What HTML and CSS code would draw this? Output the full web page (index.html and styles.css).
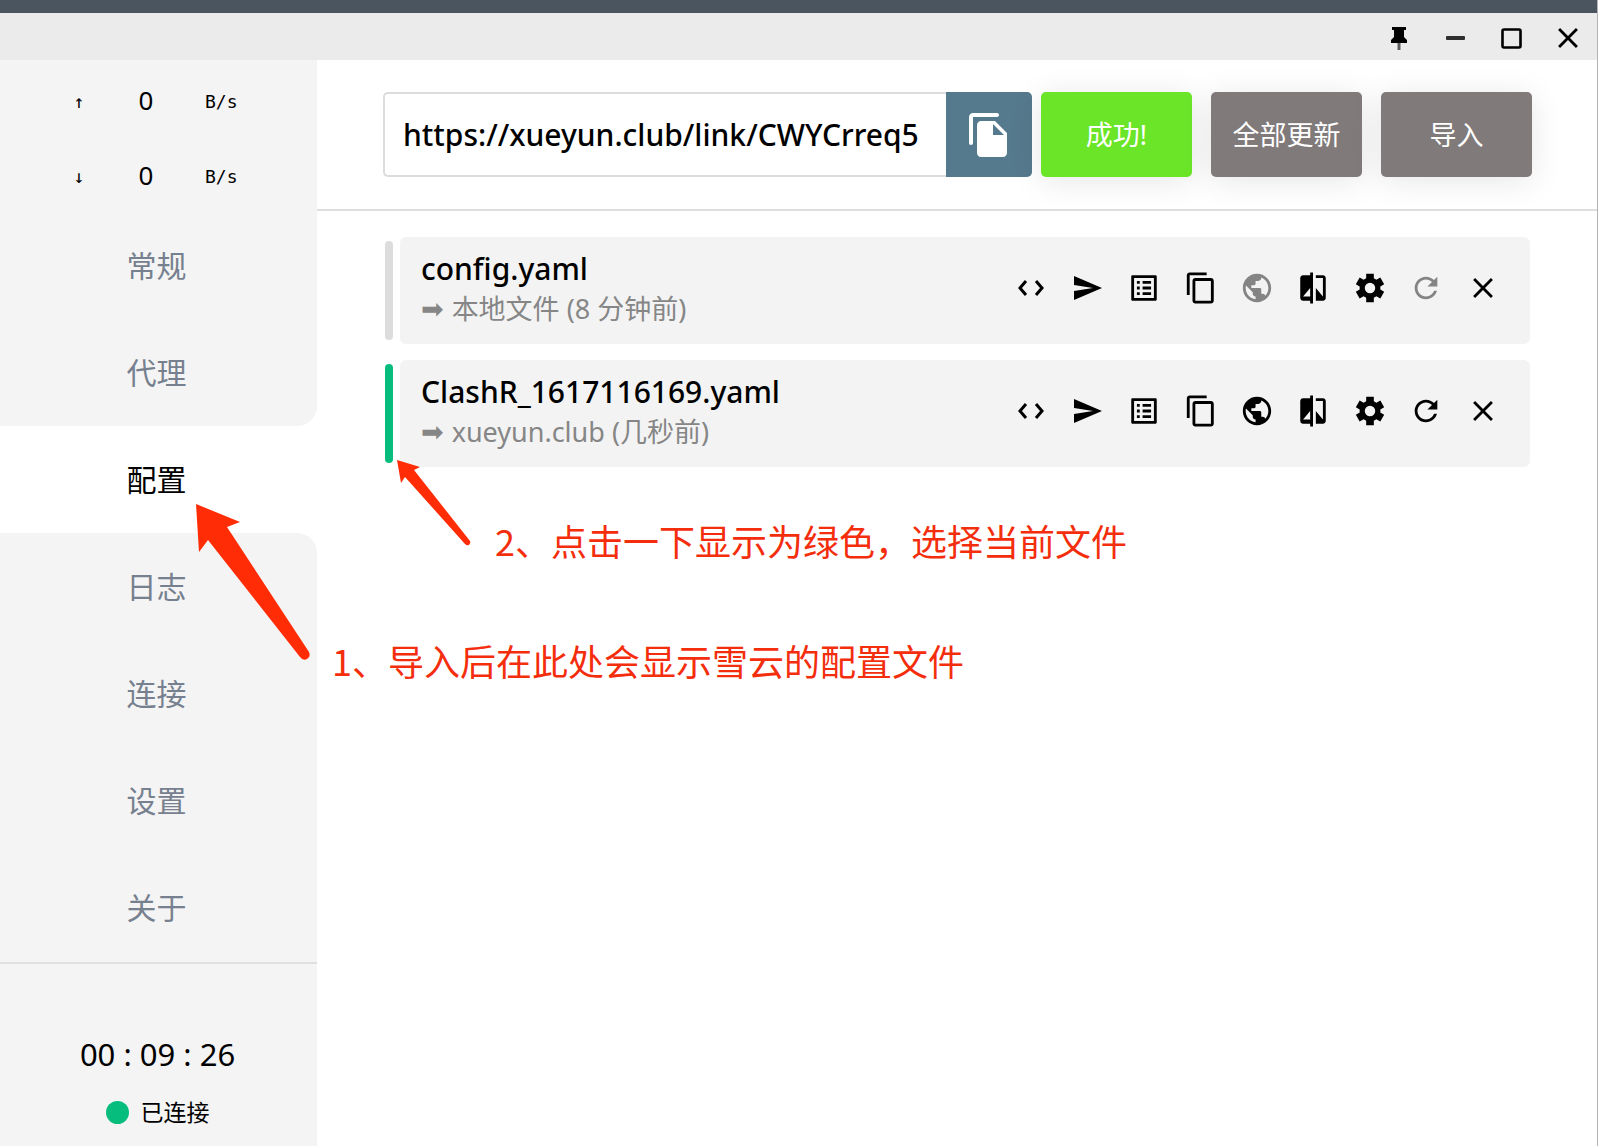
FILE: index.html
```html
<!DOCTYPE html>
<html lang="zh-CN">
<head>
<meta charset="utf-8">
<title>Clash</title>
<link rel="stylesheet" href="styles.css">
</head>
<body>
<svg class="sprite" aria-hidden="true">
  <symbol id="i-code" viewBox="0 0 34 34"><path d="M12 10 6 17l6 7M22 10l6 7-6 7" fill="none" stroke="currentColor" stroke-width="3"/></symbol>
  <symbol id="i-send" viewBox="0 0 34 34"><path d="M3 5v9l19 3-19 3v9l28-12z"/></symbol>
  <symbol id="i-list" viewBox="0 0 24 24"><path d="M19 5v14H5V5h14m1.100-2H3.900c-.5 0-.9.400-.9.900v16.200c0 .4.400.9.900.9h16.200c.4 0 .9-.5.900-.9V3.900c0-.5-.5-.9-.9-.9zM11 7h6v2h-6V7zm0 4h6v2h-6v-2zm0 4h6v2h-6zM7 7h2v2H7zm0 4h2v2H7zm0 4h2v2H7z"/></symbol>
  <symbol id="i-copy" viewBox="0 0 24 24"><path d="M16 1H4c-1.100 0-2 .9-2 2v14h2V3h12V1zm3 4H8c-1.100 0-2 .9-2 2v14c0 1.100.9 2 2 2h11c1.100 0 2-.9 2-2V7c0-1.100-.9-2-2-2zm0 16H8V7h11v14z"/></symbol>
  <symbol id="i-filecopy" viewBox="0 0 24 24"><path d="M16 1H4c-1.100 0-2 .9-2 2v13c0 .6.400 1 1 1s1-.4 1-1V3h12c.6 0 1-.4 1-1s-.4-1-1-1zm-1 4 6 6v10c0 1.100-.9 2-2 2H7.990C6.890 23 6 22.100 6 21l.01-14c0-1.100.89-2 1.990-2h7zm-1 7h5.500L14 6.500V12z"/></symbol>
  <symbol id="i-globe" viewBox="0 0 24 24"><path d="M12 2C6.480 2 2 6.480 2 12s4.480 10 10 10 10-4.480 10-10S17.520 2 12 2zm-1 17.930c-3.950-.49-7-3.850-7-7.930 0-.62.08-1.210.21-1.790L9 15v1c0 1.100.9 2 2 2v1.930zm6.900-2.540c-.26-.81-1-1.390-1.900-1.390h-1v-3c0-.55-.45-1-1-1H8v-2h2c.55 0 1-.45 1-1V7h2c1.100 0 2-.9 2-2v-.41c2.930 1.190 5 4.060 5 7.410 0 2.080-.8 3.970-2.100 5.390z"/></symbol>
  <symbol id="i-compare" viewBox="0 0 24 24"><path d="M10 3H5c-1.100 0-2 .9-2 2v14c0 1.100.9 2 2 2h5v2h2V1h-2v2zm0 15H5l5-6v6zm9-15h-5v2h5v13l-5-6v9h5c1.100 0 2-.9 2-2V5c0-1.100-.9-2-2-2z"/></symbol>
  <symbol id="i-gear" viewBox="0 0 24 24"><path fill-rule="evenodd" d="M9.300 2h5.400v3.200l1.800 1 2.800-1.600L22 9.300l-2.700 1.600v2.200l2.700 1.600-2.700 4.700-2.800-1.600-1.800 1V22H9.300v-3.200l-1.800-1-2.800 1.600L2 14.700l2.700-1.600v-2.200L2 9.300l2.700-4.700 2.800 1.600 1.800-1zM12 8.300a3.700 3.700 0 1 0 0 7.400 3.700 3.700 0 0 0 0-7.400z"/></symbol>
  <symbol id="i-refresh" viewBox="0 0 24 24"><path d="M17.650 6.350C16.200 4.900 14.210 4 12 4c-4.420 0-7.990 3.580-7.990 8s3.570 8 7.990 8c3.730 0 6.840-2.550 7.730-6h-2.080c-.82 2.330-3.040 4-5.650 4-3.310 0-6-2.690-6-6s2.690-6 6-6c1.660 0 3.140.69 4.220 1.780L13 11h7V4l-2.350 2.350z"/></symbol>
  <symbol id="i-close" viewBox="0 0 24 24"><path d="M19 6.410 17.590 5 12 10.590 6.410 5 5 6.410 10.590 12 5 17.590 6.410 19 12 13.410 17.590 19 19 17.590 13.410 12z"/></symbol>
  <symbol id="i-pin" viewBox="0 0 34 34"><path d="M9 6h14v3h-2v7l3 3v3H8v-3l3-3V9H9z"/><path d="M14.500 22h3v7h-3z" opacity=".6"/></symbol>
  <symbol id="i-min" viewBox="0 0 34 34"><rect x="7" y="15" width="19" height="4" rx="1" opacity=".8"/></symbol>
  <symbol id="i-max" viewBox="0 0 34 34"><rect x="7.500" y="8.500" width="18" height="18" rx="1.500" fill="none" stroke="currentColor" stroke-width="2.600"/></symbol>
</svg>

<div class="window">
  <div class="backdrop"></div>
  <header class="titlebar">
    <button class="icon" aria-label="置顶"><svg><use href="#i-pin"/></svg></button>
    <button class="icon" aria-label="最小化"><svg><use href="#i-min"/></svg></button>
    <button class="icon" aria-label="最大化"><svg><use href="#i-max"/></svg></button>
    <button class="icon" aria-label="关闭"><svg><use href="#i-close"/></svg></button>
  </header>
  <div class="body">
    <aside class="sidebar">
      <div class="speeds">
        <div class="speed"><span class="unit">↑</span><span class="value">0</span><span class="unit">B/s</span></div>
        <div class="speed"><span class="unit">↓</span><span class="value">0</span><span class="unit">B/s</span></div>
      </div>
      <nav class="nav">
        <a href="#general">常规</a>
        <a href="#proxies" class="before">代理</a>
        <a href="#profiles" class="active" aria-current="page">配置</a>
        <a href="#logs" class="after">日志</a>
        <a href="#connections">连接</a>
        <a href="#settings">设置</a>
        <a href="#about">关于</a>
      </nav>
      <div class="status">
        <div class="timer">00 : 09 : 26</div>
        <div class="state"><span class="dot"></span>已连接</div>
      </div>
    </aside>
    <main class="main">
      <form class="toolbar">
        <div class="field">
          <input type="text" aria-label="配置链接" value="https://xueyun.club/link/CWYCrreq5">
          <button type="button" class="paste" aria-label="粘贴"><svg><use href="#i-filecopy"/></svg></button>
        </div>
        <div class="actions">
          <button type="button" class="action success">成功!</button>
          <button type="button" class="action">全部更新</button>
          <button type="button" class="action">导入</button>
        </div>
      </form>
      <ul class="profiles">
        <li class="profile">
          <span class="marker"></span>
          <div class="card">
            <div class="info">
              <div class="name">config.yaml</div>
              <div class="source"><span class="arrow">➡</span>本地文件 (8 分钟前)</div>
            </div>
            <div class="tools">
              <button class="icon" aria-label="代码"><svg><use href="#i-code"/></svg></button>
              <button class="icon" aria-label="发送"><svg><use href="#i-send"/></svg></button>
              <button class="icon" aria-label="规则"><svg><use href="#i-list"/></svg></button>
              <button class="icon" aria-label="复制"><svg><use href="#i-copy"/></svg></button>
              <button class="icon" aria-label="网页" disabled><svg><use href="#i-globe"/></svg></button>
              <button class="icon" aria-label="比较"><svg><use href="#i-compare"/></svg></button>
              <button class="icon" aria-label="设置"><svg><use href="#i-gear"/></svg></button>
              <button class="icon" aria-label="更新" disabled><svg><use href="#i-refresh"/></svg></button>
              <button class="icon" aria-label="删除"><svg><use href="#i-close"/></svg></button>
            </div>
          </div>
        </li>
        <li class="profile selected">
          <span class="marker"></span>
          <div class="card">
            <div class="info">
              <div class="name">ClashR_1617116169.yaml</div>
              <div class="source"><span class="arrow">➡</span>xueyun.club (几秒前)</div>
            </div>
            <div class="tools">
              <button class="icon" aria-label="代码"><svg><use href="#i-code"/></svg></button>
              <button class="icon" aria-label="发送"><svg><use href="#i-send"/></svg></button>
              <button class="icon" aria-label="规则"><svg><use href="#i-list"/></svg></button>
              <button class="icon" aria-label="复制"><svg><use href="#i-copy"/></svg></button>
              <button class="icon" aria-label="网页"><svg><use href="#i-globe"/></svg></button>
              <button class="icon" aria-label="比较"><svg><use href="#i-compare"/></svg></button>
              <button class="icon" aria-label="设置"><svg><use href="#i-gear"/></svg></button>
              <button class="icon" aria-label="更新"><svg><use href="#i-refresh"/></svg></button>
              <button class="icon" aria-label="删除"><svg><use href="#i-close"/></svg></button>
            </div>
          </div>
        </li>
      </ul>
    </main>
  </div>
  <svg class="pointers" width="480" height="670" viewBox="0 0 480 670" aria-hidden="true">
    <path d="M196 504l44 18-13 5 82 125q2 5-2 7-4 2-7-2L208 540l-9 12z"/>
    <path d="M397 460l23 7-6 3 56 71q1 2-1 4-2 1-4-1L405 477l-4 6z"/>
  </svg>
  <p class="note note-select">2、点击一下显示为绿色，选择当前文件</p>
  <p class="note note-import">1、导入后在此处会显示雪云的配置文件</p>
</div>
</body>
</html>
```
FILE: styles.css
```css
* { box-sizing: border-box; }

body {
  margin: 0;
  font-family: "Noto Sans", "Noto Sans CJK SC", sans-serif;
  color: #000;
  background: #fff;
}

button {
  border: 0;
  padding: 0;
  background: none;
  color: inherit;
  font: inherit;
}

svg { fill: currentColor; }
.sprite { display: none; }

.window {
  position: relative;
  display: flex;
  flex-direction: column;
  min-height: 100vh;
  border-right: 1px solid #b4b4b4;
}

.backdrop { height: 13px; background: #4a555f; }

.titlebar {
  display: flex;
  justify-content: flex-end;
  align-items: center;
  gap: 22px;
  height: 47px;
  padding: 2px 12px 0 0;
  background: #ebebeb;
}

.icon { display: grid; place-items: center; color: #000; }
.icon svg { width: 34px; height: 34px; }
.icon:disabled { color: #848484; }

.body { flex: 1; display: flex; }

.sidebar {
  display: flex;
  flex-direction: column;
  width: 317px;
}

.speeds { padding: 2px 65px 0; background: #f4f4f4; }

.speed {
  display: grid;
  grid-template-columns: 28px 106px 1fr;
  align-items: center;
  height: 75px;
  text-align: center;
}
.speed .unit { padding-top: 4px; font: 18px/28px "DejaVu Sans Mono", monospace; }
.speed .unit:last-child { padding-left: 6px; text-align: left; }
.speed .value { font-size: 26px; line-height: 36px; }

.nav { flex: 1; display: flex; flex-direction: column; border-bottom: 2px solid #e0e0e0; }
.nav a {
  flex: 1;
  display: grid;
  place-items: center;
  padding-right: 4px;
  background: #f4f4f4;
  color: #76808e;
  font-size: 30px;
  line-height: 44px;
  text-decoration: none;
}
.nav .active { background: #fff; color: #000; }
.nav .before { border-bottom-right-radius: 20px; }
.nav .after { border-top-right-radius: 20px; }

.status {
  display: flex;
  flex-direction: column;
  align-items: center;
  gap: 22px;
  height: 182px;
  padding: 68px 2px 0 0;
  background: #f4f4f4;
}
.timer { font-size: 31px; line-height: 44px; }
.state { display: flex; align-items: center; gap: 12px; font-size: 23px; line-height: 28px; }
.dot { width: 23px; height: 23px; border-radius: 50%; background: #06bd7d; }

.main { flex: 1; min-width: 0; }

.toolbar {
  display: flex;
  gap: 9px;
  padding: 32px 65px 32px 66px;
  border-bottom: 2px solid #dedede;
}

.field { flex: 1; display: flex; height: 85px; min-width: 0; }
.field input {
  flex: 1;
  min-width: 0;
  padding: 0 8px 0 18px;
  border: 2px solid #dcdcdc;
  border-right: 0;
  border-radius: 5px 0 0 5px;
  font: 500 30px/44px "Noto Sans", "Noto Sans CJK SC", sans-serif;
  color: #000;
  background: #fff;
}
.paste {
  display: grid;
  place-items: center;
  width: 86px;
  border-radius: 0 5px 5px 0;
  background: #567a8d;
  color: #fff;
}
.paste svg { width: 48px; height: 48px; }

.actions { display: flex; gap: 19px; }
.action {
  width: 151px;
  border-radius: 5px;
  background: #807a7b;
  color: #fff;
  font-size: 27px;
  line-height: 40px;
  box-shadow: 0 4px 32px rgba(0, 0, 0, .1);
}
.action.success { background: #6ae528; }

.profiles {
  display: flex;
  flex-direction: column;
  gap: 16px;
  margin: 0;
  padding: 26px 67px 0 68px;
  list-style: none;
}
.profile { display: flex; gap: 7px; }
.marker { width: 8px; margin: 4px 0; border-radius: 4px; background: #dcdcdc; }
.selected .marker { background: #06bd7d; }
.card {
  flex: 1;
  display: flex;
  justify-content: space-between;
  height: 107px;
  padding: 10px 19px 0 21px;
  border-radius: 6px;
  background: #f3f3f3;
}
.name { font-size: 30px; font-weight: 500; line-height: 44px; }
.source { display: flex; align-items: center; gap: 8px; font-size: 27px; line-height: 36px; color: #868686; }
.arrow { font-family: "DejaVu Sans", sans-serif; }
.tools { display: grid; grid-template-columns: repeat(9, 1fr); width: 508px; height: 82px; }

.pointers { position: absolute; left: 0; top: 0; fill: #ff2c05; pointer-events: none; }
.note {
  position: absolute;
  margin: 0;
  font-family: "Noto Sans CJK SC", sans-serif;
  font-size: 36px;
  line-height: 52px;
  color: #f42e0c;
  white-space: nowrap;
}
.note-select { left: 495px; top: 514px; }
.note-import { left: 332px; top: 634px; }
```
